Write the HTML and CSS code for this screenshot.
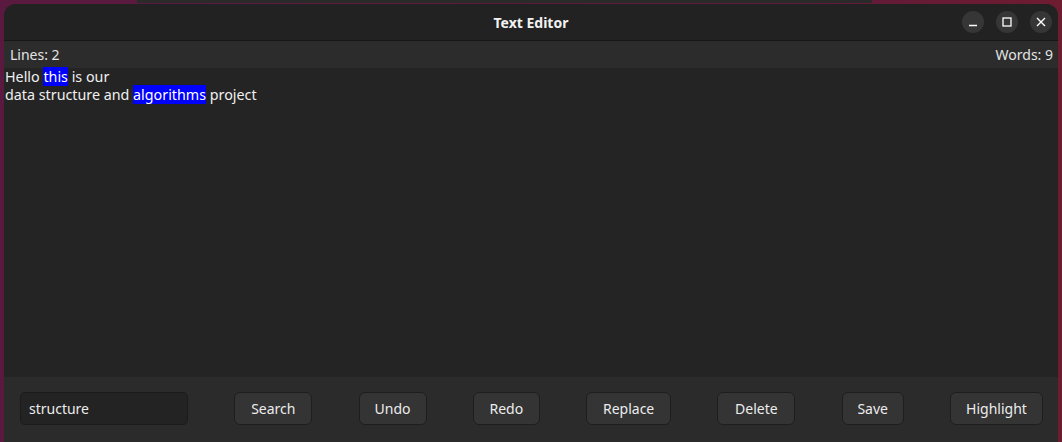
FILE: index.html
```html
<!DOCTYPE html>
<html>
<head>
<meta charset="utf-8">
<link rel="stylesheet" href="styles.css">
</head>
<body>
<div class="window">
  <header class="titlebar">
    <div class="title">Text Editor</div>
    <div class="controls">
      <span class="ctl"><svg width="12" height="12" viewBox="0 0 12 12"><path d="M2 9.5h8" stroke="#fff" stroke-width="1.3"/></svg></span>
      <span class="ctl"><svg width="12" height="12" viewBox="0 0 12 12"><rect x="2" y="2" width="8" height="8" fill="none" stroke="#fff" stroke-width="1.3"/></svg></span>
      <span class="ctl"><svg width="12" height="12" viewBox="0 0 12 12"><path d="M2 2l8 8M10 2l-8 8" stroke="#fff" stroke-width="1.4"/></svg></span>
    </div>
  </header>
  <div class="statusbar">
    <span>Lines: 2</span>
    <span>Words: 9</span>
  </div>
  <div class="editor">
    <div class="line">Hello <span class="hl">this</span> is our</div>
    <div class="line">data structure and <span class="hl">algorithms</span> project</div>
  </div>
  <div class="toolbar">
    <div class="input">structure</div>
    <button class="btn w-search">Search</button>
    <button class="btn w-undo">Undo</button>
    <button class="btn w-redo">Redo</button>
    <button class="btn w-replace">Replace</button>
    <button class="btn w-delete">Delete</button>
    <button class="btn w-save">Save</button>
    <button class="btn w-highlight">Highlight</button>
  </div>
</div>
</body>
</html>
```

FILE: styles.css
```css
html, body {
  margin: 0;
  height: 100%;
}
body {
  padding: 4px 4px 0 4px;
  box-sizing: border-box;
  background:
    linear-gradient(#2a2a2a, #2a2a2a) 137px 0 / 735px 3px no-repeat,
    linear-gradient(90deg, #5a1a40 0%, #5c1a3c 70%, #6e1c30 100%);
  font-family: "Noto Sans", "DejaVu Sans", sans-serif;
  font-size: 14px;
  color: #eeeeee;
  overflow: hidden;
}
.window {
  height: 100%;
  display: flex;
  flex-direction: column;
  border-radius: 12px 12px 0 0;
  overflow: hidden;
  background: #242424;
}
.titlebar {
  height: 36px;
  flex: none;
  background: #222222;
  border-bottom: 1px solid #161616;
  display: flex;
  align-items: center;
  justify-content: center;
  position: relative;
}
.title {
  font-weight: bold;
  font-size: 14px;
  color: #f2f2f2;
}
.controls {
  position: absolute;
  right: 6px;
  top: 7px;
  display: flex;
  gap: 12px;
}
.ctl {
  width: 22px;
  height: 22px;
  border-radius: 50%;
  background: #363636;
  display: flex;
  align-items: center;
  justify-content: center;
}
.statusbar {
  height: 27px;
  flex: none;
  background: #2c2c2c;
  display: flex;
  justify-content: space-between;
  align-items: center;
  padding: 0 5px 0 6px;
  font-size: 14px;
  color: #e4e4e4;
}
.editor {
  flex: 1;
  background: #242424;
  padding: 0 1px;
  color: #f0f0f0;
  font-size: 14.3px;
}
.line {
  height: 18px;
  line-height: 18px;
}
.hl {
  background: #0000ff;
  color: #ffffff;
}
.toolbar {
  height: 65px;
  flex: none;
  background: #2b2b2b;
  display: flex;
  justify-content: space-between;
  align-items: flex-start;
  padding: 15px 15px 0 16px;
  box-sizing: border-box;
}
.input {
  width: 168px;
  height: 33px;
  box-sizing: border-box;
  background: #232323;
  border: 1px solid #1b1b1b;
  border-radius: 5px;
  padding: 0 8px;
  display: flex;
  align-items: center;
  color: #ececec;
}
.btn {
  height: 33px;
  box-sizing: border-box;
  background: #343434;
  border: 1px solid #1e1e1e;
  border-radius: 6px;
  color: #ececec;
  font-family: inherit;
  font-size: 14px;
  padding: 0;
}
.w-search { width: 78px; }
.w-undo { width: 68px; }
.w-redo { width: 67px; }
.w-replace { width: 85px; }
.w-delete { width: 78px; }
.w-save { width: 62px; }
.w-highlight { width: 93px; }
```
